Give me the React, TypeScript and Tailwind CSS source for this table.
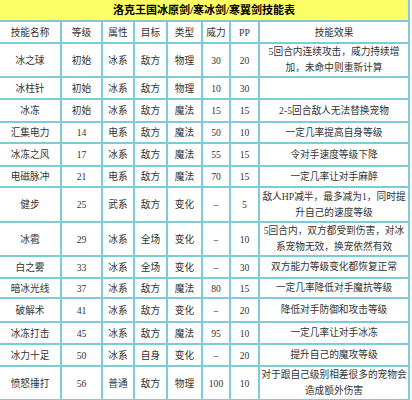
const FONT = { fontFamily: '"Liberation Serif", "Noto Sans CJK SC", serif' };

type Row = {
  name: string;
  level: string;
  attr: string;
  target: string;
  kind: string;
  power: string;
  pp: string;
  effect: string[];
  h: string;
};

const ROWS: Row[] = [
  { name: "冰之球", level: "初始", attr: "冰系", target: "敌方", kind: "物理", power: "30", pp: "20", effect: ["5回合内连续攻击，威力持续增", "加，未命中则重新计算"], h: "h-[34px]" },
  { name: "冰柱针", level: "初始", attr: "冰系", target: "敌方", kind: "物理", power: "10", pp: "30", effect: [], h: "h-[22px]" },
  { name: "冰冻", level: "初始", attr: "冰系", target: "敌方", kind: "魔法", power: "15", pp: "15", effect: ["2-5回合敌人无法替换宠物"], h: "h-[23px]" },
  { name: "汇集电力", level: "14", attr: "电系", target: "敌方", kind: "魔法", power: "50", pp: "10", effect: ["一定几率提高自身等级"], h: "h-[21px]" },
  { name: "冰冻之风", level: "17", attr: "冰系", target: "敌方", kind: "魔法", power: "55", pp: "15", effect: ["令对手速度等级下降"], h: "h-[23px]" },
  { name: "电磁脉冲", level: "21", attr: "电系", target: "敌方", kind: "魔法", power: "70", pp: "15", effect: ["一定几率让对手麻醉"], h: "h-[21px]" },
  { name: "健步", level: "25", attr: "武系", target: "敌方", kind: "变化", power: "–", pp: "5", effect: ["敌人HP减半，最多减为1，同时提", "升自己的速度等级"], h: "h-[35px]" },
  { name: "冰雹", level: "29", attr: "冰系", target: "全场", kind: "变化", power: "–", pp: "10", effect: ["5回合内，双方都受到伤害，对冰", "系宠物无效，换宠依然有效"], h: "h-[33px]" },
  { name: "白之雾", level: "33", attr: "冰系", target: "全场", kind: "变化", power: "–", pp: "30", effect: ["双方能力等级变化都恢复正常"], h: "h-[22px]" },
  { name: "暗冰光线", level: "37", attr: "冰系", target: "敌方", kind: "魔法", power: "80", pp: "15", effect: ["一定几率降低对手魔抗等级"], h: "h-[20px]" },
  { name: "破解术", level: "41", attr: "冰系", target: "敌方", kind: "变化", power: "–", pp: "20", effect: ["降低对手防御和攻击等级"], h: "h-[24px]" },
  { name: "冰冻打击", level: "45", attr: "冰系", target: "敌方", kind: "魔法", power: "95", pp: "10", effect: ["一定几率让对手冰冻"], h: "h-[22px]" },
  { name: "冰力十足", level: "50", attr: "冰系", target: "自身", kind: "变化", power: "–", pp: "20", effect: ["提升自己的魔攻等级"], h: "h-[22px]" },
  { name: "愤怒捶打", level: "56", attr: "普通", target: "敌方", kind: "物理", power: "100", pp: "10", effect: ["对于跟自己级别相差很多的宠物会", "造成额外伤害"], h: "h-[32px]" },
];

const HEAD = ["技能名称", "等级", "属性", "目标", "类型", "威力", "PP", "技能效果"];
const WIDTHS = [61, 41, 32, 33, 35, 28, 29, 150];

const cell = "border-2 border-[#7ccbd8] p-0 text-center align-middle";

export default function App() {
  return (
    <div className="h-[400px] w-[412px] overflow-hidden bg-white text-[#333]" style={FONT}>
      <table className="w-[410px] table-fixed border-collapse text-[9.7px] leading-[15px]">
        <colgroup>
          {WIDTHS.map((w, i) => (
            <col key={i} style={{ width: w }} />
          ))}
        </colgroup>
        <tbody>
          <tr className="h-[21px]">
            <td colSpan={8} className={`${cell} border-l-0 border-t-0 bg-[#ffff66] text-[11px] font-bold text-black`}>
              洛克王国冰原剑/寒冰剑/寒翼剑技能表
            </td>
          </tr>
          <tr className="h-[22px]">
            {HEAD.map((t, i) => (
              <td key={t} className={`${cell} ${i === 0 ? "border-l-0" : ""}`}>
                {t}
              </td>
            ))}
          </tr>
          {ROWS.map((r) => (
            <tr key={r.name} className={r.h}>
              <td className={`${cell} border-l-0`}>{r.name}</td>
              <td className={cell}>{r.level}</td>
              <td className={cell}>{r.attr}</td>
              <td className={cell}>{r.target}</td>
              <td className={cell}>{r.kind}</td>
              <td className={cell}>{r.power}</td>
              <td className={cell}>{r.pp}</td>
              <td className={`${cell} whitespace-nowrap leading-[16px]`}>
                {r.effect.map((line, i) => (
                  <div key={i}>{line}</div>
                ))}
              </td>
            </tr>
          ))}
        </tbody>
      </table>
    </div>
  );
}
